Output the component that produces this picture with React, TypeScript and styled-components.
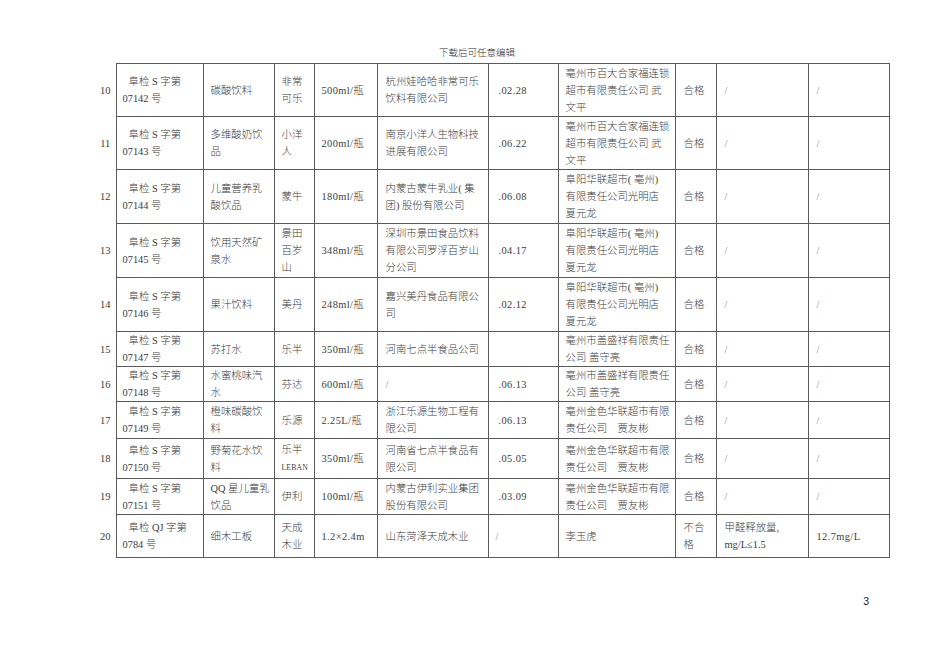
import React from 'react';
import styled, { createGlobalStyle } from 'styled-components';

const GlobalStyle = createGlobalStyle`
  html, body {
    margin: 0;
    padding: 0;
    background: #fff;
  }
  body {
    font-family: "Liberation Serif", "Noto Sans CJK SC", serif;
    color: #333;
  }
`;

const Page = styled.div`
  width: 950px;
  height: 672px;
  background: #fff;
  display: flex;
  flex-direction: column;
  padding-top: 46px;
  box-sizing: border-box;
`;

const TopNote = styled.div`
  text-align: center;
  font-family: "Noto Sans CJK SC", sans-serif;
  font-weight: 300;
  font-size: 9.5px;
  line-height: 12px;
  color: #333;
  padding-left: 4px;
  margin-bottom: 5px;
`;

const TableWrap = styled.div`
  padding-left: 95px;
`;

const Table = styled.table`
  border-collapse: collapse;
  table-layout: fixed;
  width: 794px;
  font-size: 10.4px;
  font-weight: 300;
  line-height: 17px;
  color: #3c3c3c;
`;

const Row = styled.tr<{ $h: number }>`
  height: ${(p) => p.$h}px;
`;

const NumCell = styled.td`
  border: none;
  padding: 0;
  text-align: center;
  vertical-align: middle;
  font-size: 10.5px;
`;

const Cell = styled.td<{ $pad?: number; $muted?: boolean; $latin?: boolean }>`
  border: 1px solid #5a5a5a;
  padding: 0 2px 0 ${(p) => p.$pad ?? 7}px;
  vertical-align: middle;
  text-align: left;
  white-space: nowrap;
  overflow: hidden;
  letter-spacing: ${(p) => (p.$latin ? '0.4px' : '0')};
  color: ${(p) => (p.$muted ? '#8a8a8a' : '#3c3c3c')};
`;

const FirstLine = styled.span`
  padding-left: 6px;
`;

const Small = styled.span`
  font-size: 7.6px;
  letter-spacing: 0.2px;
`;

const Footer = styled.div`
  display: flex;
  justify-content: flex-end;
  padding-right: 81px;
  margin-top: 36px;
  font-family: "Liberation Sans", sans-serif;
  font-size: 10.5px;
  line-height: 14px;
  color: #222;
`;

type Item = {
  n: string;
  id: string[];
  name: string[];
  brand: React.ReactNode[];
  spec: string;
  maker: string[];
  date: string;
  seller: string[];
  result: string[];
  item: string[];
  value: string[];
  h: number;
};

const sellerA = ['亳州市百大合家福连锁', '超市有限责任公司 武', '文平'];
const sellerB = ['阜阳华联超市( 亳州)', '有限责任公司光明店', '夏元龙'];
const sellerC = ['亳州市盖盛祥有限责任', '公司 盖守亮'];
const sellerD = ['亳州金色华联超市有限', '责任公司　贾友彬'];

const rows: Item[] = [
  { n: '10', id: ['阜检 S 字第', '07142 号'], name: ['碳酸饮料'], brand: ['非常', '可乐'], spec: '500ml/瓶', maker: ['杭州娃哈哈非常可乐', '饮料有限公司'], date: '.02.28', seller: sellerA, result: ['合格'], item: ['/'], value: ['/'], h: 53 },
  { n: '11', id: ['阜检 S 字第', '07143 号'], name: ['多维酸奶饮', '品'], brand: ['小洋', '人'], spec: '200ml/瓶', maker: ['南京小洋人生物科技', '进展有限公司'], date: '.06.22', seller: sellerA, result: ['合格'], item: ['/'], value: ['/'], h: 53 },
  { n: '12', id: ['阜检 S 字第', '07144 号'], name: ['儿童营养乳', '酸饮品'], brand: ['蒙牛'], spec: '180ml/瓶', maker: ['内蒙古蒙牛乳业( 集', '团) 股份有限公司'], date: '.06.08', seller: sellerB, result: ['合格'], item: ['/'], value: ['/'], h: 54 },
  { n: '13', id: ['阜检 S 字第', '07145 号'], name: ['饮用天然矿', '泉水'], brand: ['景田', '百岁', '山'], spec: '348ml/瓶', maker: ['深圳市景田食品饮料', '有限公司罗浮百岁山', '分公司'], date: '.04.17', seller: sellerB, result: ['合格'], item: ['/'], value: ['/'], h: 54 },
  { n: '14', id: ['阜检 S 字第', '07146 号'], name: ['果汁饮料'], brand: ['美丹'], spec: '248ml/瓶', maker: ['嘉兴美丹食品有限公', '司'], date: '.02.12', seller: sellerB, result: ['合格'], item: ['/'], value: ['/'], h: 54 },
  { n: '15', id: ['阜检 S 字第', '07147 号'], name: ['苏打水'], brand: ['乐半'], spec: '350ml/瓶', maker: ['河南七点半食品公司'], date: '', seller: sellerC, result: ['合格'], item: ['/'], value: ['/'], h: 34 },
  { n: '16', id: ['阜检 S 字第', '07148 号'], name: ['水蜜桃味汽', '水'], brand: ['芬达'], spec: '600ml/瓶', maker: ['/'], date: '.06.13', seller: sellerC, result: ['合格'], item: ['/'], value: ['/'], h: 35 },
  { n: '17', id: ['阜检 S 字第', '07149 号'], name: ['橙味碳酸饮', '料'], brand: ['乐源'], spec: '2.25L/瓶', maker: ['浙江乐源生物工程有', '限公司'], date: '.06.13', seller: sellerD, result: ['合格'], item: ['/'], value: ['/'], h: 37 },
  { n: '18', id: ['阜检 S 字第', '07150 号'], name: ['野菊花水饮', '料'], brand: ['乐半', <Small key="l">LEBAN</Small>], spec: '350ml/瓶', maker: ['河南省七点半食品有', '限公司'], date: '.05.05', seller: sellerD, result: ['合格'], item: ['/'], value: ['/'], h: 40 },
  { n: '19', id: ['阜检 S 字第', '07151 号'], name: ['QQ 星儿童乳', '饮品'], brand: ['伊利'], spec: '100ml/瓶', maker: ['内蒙古伊利实业集团', '股份有限公司'], date: '.03.09', seller: sellerD, result: ['合格'], item: ['/'], value: ['/'], h: 36 },
  { n: '20', id: ['阜检 QJ 字第', '0784 号'], name: ['细木工板'], brand: ['天成', '木业'], spec: '1.2×2.4m', maker: ['山东菏泽天成木业'], date: '/', seller: ['李玉虎'], result: ['不合', '格'], item: ['甲醛释放量,', 'mg/L≤1.5'], value: ['12.7mg/L'], h: 43 },
];

const widths = [21, 87, 71, 40, 63, 111, 70, 117, 41, 92, 81];

const Lines = ({ lines }: { lines: React.ReactNode[] }) => (
  <>
    {lines.map((l, i) => (
      <React.Fragment key={i}>
        {i > 0 && <br />}
        {l}
      </React.Fragment>
    ))}
  </>
);

const App: React.FC = () => {
  return (
    <Page>
      <GlobalStyle />
      <TopNote>下载后可任意编辑</TopNote>
      <TableWrap>
        <Table>
          <colgroup>
            {widths.map((w, i) => (
              <col key={i} style={{ width: w }} />
            ))}
          </colgroup>
          <tbody>
            {rows.map((r) => (
              <Row key={r.n} $h={r.h}>
                <NumCell>{r.n}</NumCell>
                <Cell $pad={6}>
                  <FirstLine>{r.id[0]}</FirstLine>
                  <br />
                  {r.id[1]}
                </Cell>
                <Cell>
                  <Lines lines={r.name} />
                </Cell>
                <Cell>
                  <Lines lines={r.brand} />
                </Cell>
                <Cell $latin>{r.spec}</Cell>
                <Cell $pad={8} $muted={r.maker[0] === '/'}>
                  <Lines lines={r.maker} />
                </Cell>
                <Cell $latin $pad={r.date === '/' ? 7 : 10} $muted={r.date === '/'}>
                  {r.date}
                </Cell>
                <Cell>
                  <Lines lines={r.seller} />
                </Cell>
                <Cell $pad={8}>
                  <Lines lines={r.result} />
                </Cell>
                <Cell $pad={8} $muted={r.item[0] === '/'}>
                  <Lines lines={r.item} />
                </Cell>
                <Cell $latin $pad={8} $muted={r.value[0] === '/'}>
                  <Lines lines={r.value} />
                </Cell>
              </Row>
            ))}
          </tbody>
        </Table>
      </TableWrap>
      <Footer>3</Footer>
    </Page>
  );
};

export default App;
